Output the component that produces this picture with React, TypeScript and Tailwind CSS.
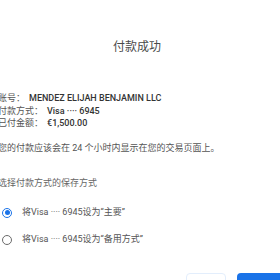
export default function App() {
  const font = { fontFamily: '"Roboto", "Noto Sans CJK SC", sans-serif' };
  const info = [
    { label: "账号：", value: "MENDEZ ELIJAH BENJAMIN LLC" },
    { label: "付款方式：", value: "Visa ···· 6945" },
    { label: "已付金额：", value: "€1,500.00" },
  ];
  const options = [
    { label: "将Visa ···· 6945设为“主要”", checked: true },
    { label: "将Visa ···· 6945设为“备用方式”", checked: false },
  ];

  return (
    <div className="w-[280px] h-[280px] overflow-hidden bg-white relative" style={font}>
      <div className="ml-[-2px] pr-2">
        <h1 className="pt-[39px] text-center text-[12px] leading-[16px] text-[#4a4a4a] pl-[4px]">付款成功</h1>

        <div className="mt-[37px] text-[9px] leading-[12.5px] whitespace-nowrap">
          {info.map((r) => (
            <div key={r.label} className="flex">
              <span className="text-[#555]">{r.label}</span>
              <span className="ml-[4px] font-medium text-[#333]">{r.value}</span>
            </div>
          ))}
        </div>

        <p className="mt-[12px] text-[9px] leading-[12px] text-[#555] whitespace-nowrap">
          您的付款应该会在 24 个小时内显示在您的交易页面上。
        </p>

        <p className="mt-[23px] text-[9px] leading-[12px] text-[#666] whitespace-nowrap">选择付款方式的保存方式</p>

        <div className="mt-[18px] flex flex-col gap-[15px] pl-[4px]">
          {options.map((o, i) => (
            <div key={i} className="flex items-center h-[12px]">
              <span
                className={`w-[10px] h-[10px] rounded-full border flex items-center justify-center ${
                  o.checked ? "border-[#1a73e8]" : "border-[#6b6b6b]"
                }`}
              >
                {o.checked && <span className="w-[5px] h-[5px] rounded-full bg-[#1a73e8]" />}
              </span>
              <span className="ml-[10px] text-[9px] text-[#555] whitespace-nowrap">{o.label}</span>
            </div>
          ))}
        </div>
      </div>

      <div className="absolute left-[186px] top-[273px] w-[40px] h-[20px] rounded border border-[#e3eefc]" />
      <div className="absolute left-[237px] top-[273px] w-[60px] h-[20px] rounded bg-[#1a73e8]" />
    </div>
  );
}
